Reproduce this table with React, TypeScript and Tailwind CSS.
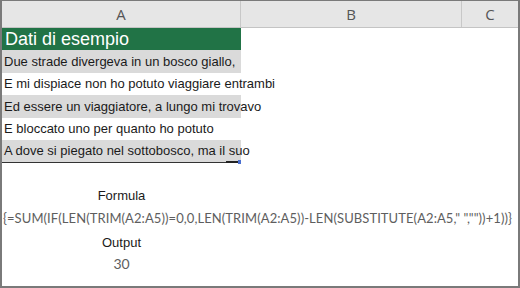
import React from 'react';

const rows: { text: string; shade: boolean }[] = [
  { text: 'Due strade divergeva in un bosco giallo,', shade: true },
  { text: 'E mi dispiace non ho potuto viaggiare entrambi', shade: false },
  { text: 'Ed essere un viaggiatore, a lungo mi trovavo', shade: true },
  { text: 'E bloccato uno per quanto ho potuto', shade: false },
  { text: 'A dove si piegato nel sottobosco, ma il suo', shade: true },
];

const formula = '{=SUM(IF(LEN(TRIM(A2:A5))=0,0,LEN(TRIM(A2:A5))-LEN(SUBSTITUTE(A2:A5," ",""))+1))}';

export default function App() {
  return (
    <div className="w-[520px] h-[288px] bg-white border-2 border-t border-[#7a7a7a] overflow-hidden font-['Liberation_Sans',sans-serif]">
      {/* column headers */}
      <div className="flex h-[27px] bg-[#e6e6e6] border-b border-[#c4c4c4] text-[15px] text-[#555] font-['Open_Sans',sans-serif]">
        <div className="w-[239px] flex items-center justify-center border-r border-[#c8c8c8]">A</div>
        <div className="w-[221px] flex items-center justify-center border-r border-[#c8c8c8]">B</div>
        <div className="flex-1 flex items-center justify-center">C</div>
      </div>

      <div className="h-[22px] w-[239px] bg-[#217346] flex items-center pl-[3px] text-[18px] text-white">
        Dati di esempio
      </div>

      {rows.map((r, i) => (
        <div
          key={i}
          className={`relative w-[239px] flex items-center pl-[2px] text-[13px] text-[#1a1a1a] whitespace-nowrap ${
            i % 2 === 0 ? 'h-[23px]' : 'h-[22px]'
          } ${r.shade ? 'bg-[#dadada]' : ''} ${i === 4 ? 'border-b border-[#333]' : ''}`}
        >
          {r.text}
          {i === 4 && (
            <>
              <div className="absolute right-[2px] -bottom-px w-[13px] h-[2px] bg-[#222]" />
              <div className="absolute right-0 bottom-[-2px] w-[3px] h-[4px] bg-[#4a6fd0]" />
            </>
          )}
        </div>
      ))}

      <div className="h-[22px]" />
      <div className="h-[22px] w-[239px] flex items-center justify-center text-[13px] text-[#1a1a1a]">Formula</div>
      <div className="h-[23px] flex items-center pl-[1px] text-[13px] tracking-[0.08px] text-[#5e5e5e] whitespace-nowrap font-['Lato',sans-serif]">
        {formula}
      </div>
      <div className="h-[22px] mt-[2px] w-[239px] flex items-center justify-center text-[13px] text-[#1a1a1a]">Output</div>
      <div className="h-[18px] w-[239px] flex items-center justify-center text-[14px] text-[#5e5e5e] font-['Lato',sans-serif]">
        30
      </div>
    </div>
  );
}
